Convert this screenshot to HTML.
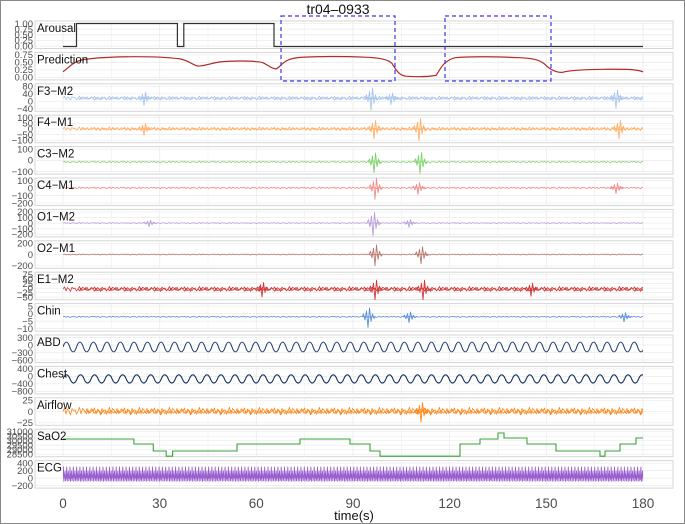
<!DOCTYPE html>
<html><head><meta charset="utf-8"><style>
html,body{margin:0;padding:0;background:#fff}
#w{width:683px;height:522px;border:1px solid #888;position:relative;overflow:hidden}
svg{position:absolute;left:-1px;top:-1px}
.tk{font-size:9.5px;fill:#4d4d4d;text-anchor:end}
.lb{font-size:11.5px;fill:#111}
</style></head><body><div id="w">
<svg width="685" height="524" xmlns="http://www.w3.org/2000/svg" xmlns:xlink="http://www.w3.org/1999/xlink" font-family="Liberation Sans, sans-serif">
<defs>
<clipPath id="c"><rect x="63" y="-3" width="580" height="33"/></clipPath>
<g id="pb"><rect x="35" y="0" width="638" height="27.5" fill="#fff" stroke="#d6d6d6"/>
<g stroke="#ebebeb" stroke-width="0.8">
<line x1="63" x2="63" y1="0" y2="27.5"/><line x1="111.3" x2="111.3" y1="0" y2="27.5" stroke-width="0.5"/><line x1="159.7" x2="159.7" y1="0" y2="27.5"/><line x1="208" x2="208" y1="0" y2="27.5" stroke-width="0.5"/><line x1="256.3" x2="256.3" y1="0" y2="27.5"/><line x1="304.6" x2="304.6" y1="0" y2="27.5" stroke-width="0.5"/><line x1="353" x2="353" y1="0" y2="27.5"/><line x1="401.3" x2="401.3" y1="0" y2="27.5" stroke-width="0.5"/><line x1="449.6" x2="449.6" y1="0" y2="27.5"/><line x1="498" x2="498" y1="0" y2="27.5" stroke-width="0.5"/><line x1="546.3" x2="546.3" y1="0" y2="27.5"/><line x1="594.6" x2="594.6" y1="0" y2="27.5" stroke-width="0.5"/><line x1="643" x2="643" y1="0" y2="27.5"/>
</g></g>
<g id="h3" stroke="#ebebeb" stroke-width="0.7"><line x1="35" x2="673" y1="2.5" y2="2.5"/><line x1="35" x2="673" y1="13.75" y2="13.75"/><line x1="35" x2="673" y1="25" y2="25"/></g>
<g id="h4" stroke="#ebebeb" stroke-width="0.7"><line x1="35" x2="673" y1="2.5" y2="2.5"/><line x1="35" x2="673" y1="10" y2="10"/><line x1="35" x2="673" y1="17.5" y2="17.5"/><line x1="35" x2="673" y1="25" y2="25"/></g>
<g id="h5" stroke="#ebebeb" stroke-width="0.7"><line x1="35" x2="673" y1="2.5" y2="2.5"/><line x1="35" x2="673" y1="8.1" y2="8.1"/><line x1="35" x2="673" y1="13.75" y2="13.75"/><line x1="35" x2="673" y1="19.4" y2="19.4"/><line x1="35" x2="673" y1="25" y2="25"/></g>
<g id="h6" stroke="#ebebeb" stroke-width="0.7"><line x1="35" x2="673" y1="2.5" y2="2.5"/><line x1="35" x2="673" y1="7" y2="7"/><line x1="35" x2="673" y1="11.5" y2="11.5"/><line x1="35" x2="673" y1="16" y2="16"/><line x1="35" x2="673" y1="20.5" y2="20.5"/><line x1="35" x2="673" y1="25" y2="25"/></g>
<path id="t" d="M0 0 l1.5 -1.2 1.5 2 1.5 -1.6 1.5 0.6 1.5 1.3 1.5 -2.1 1.5 0.8 1.5 -0.4 1.5 1.5 1.5 -1 1.5 -1.3 1.5 2.2 1.5 -1.8 1.5 0.5 1.5 0.9 1.5 -1.4 1.5 1.6 1.5 -0.7 1.5 -0.8 1.5 0.9" fill="none" stroke="currentColor" stroke-width="0.8" vector-effect="non-scaling-stroke" stroke-linejoin="round"/>
<g id="t4"><use xlink:href="#t"/><use xlink:href="#t" x="30"/><use xlink:href="#t" x="60"/><use xlink:href="#t" x="90"/></g>
<g id="N"><use xlink:href="#t4"/><use xlink:href="#t4" x="120"/><use xlink:href="#t4" x="240"/><use xlink:href="#t4" x="360"/><use xlink:href="#t4" x="480"/></g>
<path id="b" d="M-7 0 l1.5 -2 1.5 4 1.5 -6 1.5 11 1.5 -13 1.5 9 1.5 -5 1.5 3 1.5 -1" fill="none" stroke="currentColor" stroke-width="0.9" vector-effect="non-scaling-stroke" stroke-linejoin="round"/>
<path id="r" d="M0 0 c2 -5 4.5 -5 6.5 0 s4.5 5 6.5 0" fill="none" stroke="currentColor" stroke-width="1.1" vector-effect="non-scaling-stroke"/>
<g id="r4"><use xlink:href="#r"/><use xlink:href="#r" x="13"/><use xlink:href="#r" x="26"/><use xlink:href="#r" x="39"/></g>
<g id="R"><use xlink:href="#r4"/><use xlink:href="#r4" x="52"/><use xlink:href="#r4" x="104"/><use xlink:href="#r4" x="156"/><use xlink:href="#r4" x="208"/><use xlink:href="#r4" x="260"/><use xlink:href="#r4" x="312"/><use xlink:href="#r4" x="364"/><use xlink:href="#r4" x="416"/><use xlink:href="#r4" x="468"/><use xlink:href="#r4" x="520"/><use xlink:href="#r4" x="572"/></g>
<path id="e" d="M0 0 l0.4 -10 0.5 15 0.5 -7 0.6 1 1.3 1" fill="none" stroke="currentColor" stroke-width="0.9" vector-effect="non-scaling-stroke"/>
<g id="e8"><use xlink:href="#e"/><use xlink:href="#e" x="3.3"/><use xlink:href="#e" x="6.6"/><use xlink:href="#e" x="9.9"/><use xlink:href="#e" x="13.2"/><use xlink:href="#e" x="16.5"/><use xlink:href="#e" x="19.8"/><use xlink:href="#e" x="23.1"/></g>
<g id="e64"><use xlink:href="#e8"/><use xlink:href="#e8" x="26.4"/><use xlink:href="#e8" x="52.8"/><use xlink:href="#e8" x="79.2"/><use xlink:href="#e8" x="105.6"/><use xlink:href="#e8" x="132"/><use xlink:href="#e8" x="158.4"/><use xlink:href="#e8" x="184.8"/></g>
</defs>

<g transform="translate(0,21)"><use xlink:href="#pb"/><use xlink:href="#h5"/>
<text class="tk" x="33" y="5.8">1.00</text><text class="tk" x="33" y="11.4">0.75</text><text class="tk" x="33" y="17">0.50</text><text class="tk" x="33" y="22.7">0.25</text><text class="tk" x="33" y="28.3">0.00</text>
<path d="M63 25.5H76.5V2.5H177.4V25.5H183.8V2.5H274V25.5H643" fill="none" stroke="#333" stroke-width="1.2"/>
<text class="lb" x="37" y="11">Arousal</text></g>

<g transform="translate(0,52.4)"><use xlink:href="#pb"/><use xlink:href="#h4"/>
<text class="tk" x="33" y="5.8">0.75</text><text class="tk" x="33" y="13.3">0.50</text><text class="tk" x="33" y="20.8">0.25</text><text class="tk" x="33" y="28.3">0.00</text>
<path d="M63 19.4C70 14 74 9 82.3 7.5C95 5 115 4.5 133.9 4.3C150 4.3 168 4.8 180 6.5C188 8 192 12 197 13.5C202 14.5 208 11.5 220 9.5C235 8 255 8.5 262 10C268 12 270 16 276 16.5C282 14 282 6.5 300 5C320 3.8 345 4 365 4.8C380 5.5 388 7 392 11C396 17 398 22.5 406 23.8C418 24.6 428 24.4 436 23C440 18 442 9 455 5.3C470 4 495 4.2 520 5.3C535 6 540 8 545 12C550 17 555 20 562 20C570 18 580 17 604 16.9C625 16.8 636 16.6 643 19.4" fill="none" stroke="#b22a2a" stroke-width="1.2"/>
<text class="lb" x="37" y="11">Prediction</text></g>

<g transform="translate(0,83.8)"><use xlink:href="#pb"/><use xlink:href="#h4"/>
<text class="tk" x="33" y="5.8">80</text><text class="tk" x="33" y="13.3">40</text><text class="tk" x="33" y="20.8">0</text><text class="tk" x="33" y="28.3">−40</text>
<g clip-path="url(#c)" color="#a8c6ea"><use xlink:href="#N" transform="translate(63,14.5) scale(1,1.6)"/><use xlink:href="#N" transform="translate(78,14.5) scale(1,-1)"/>
<use xlink:href="#b" transform="translate(145,14.5) scale(1,1)"/><use xlink:href="#b" transform="translate(372,14.5) scale(1,1.7)"/><use xlink:href="#b" transform="translate(392,14.5) scale(1,0.9)"/><use xlink:href="#b" transform="translate(617,14.5) scale(1,1.4)"/></g>
<text class="lb" x="37" y="11">F3−M2</text></g>

<g transform="translate(0,115.2)"><use xlink:href="#pb"/><use xlink:href="#h5"/>
<text class="tk" x="33" y="5.8">100</text><text class="tk" x="33" y="11.4">50</text><text class="tk" x="33" y="17">0</text><text class="tk" x="33" y="22.7">−50</text><text class="tk" x="33" y="28.3">−100</text>
<g clip-path="url(#c)" color="#ffb16a"><use xlink:href="#N" transform="translate(63,13.75) scale(1,1.5)"/><use xlink:href="#N" transform="translate(80,13.75) scale(1,-0.9)"/>
<use xlink:href="#b" transform="translate(145,13.75) scale(1,0.9)"/><use xlink:href="#b" transform="translate(375,13.75) scale(1,1.4)"/><use xlink:href="#b" transform="translate(420,13.75) scale(1,1.7)"/><use xlink:href="#b" transform="translate(620,13.75) scale(1,1.4)"/></g>
<text class="lb" x="37" y="11">F4−M1</text></g>

<g transform="translate(0,146.6)"><use xlink:href="#pb"/><use xlink:href="#h3"/>
<text class="tk" x="33" y="5.8">100</text><text class="tk" x="33" y="17">0</text><text class="tk" x="33" y="28.3">−100</text>
<g clip-path="url(#c)" color="#7ed36b"><use xlink:href="#N" transform="translate(63,15.5) scale(1,0.7)"/>
<use xlink:href="#b" transform="translate(375,15.5) scale(1,1.5)"/><use xlink:href="#b" transform="translate(421,15.5) scale(1,1.6)"/></g>
<text class="lb" x="37" y="11">C3−M2</text></g>

<g transform="translate(0,178)"><use xlink:href="#pb"/><use xlink:href="#h4"/>
<text class="tk" x="33" y="5.8">100</text><text class="tk" x="33" y="13.3">0</text><text class="tk" x="33" y="20.8">−100</text><text class="tk" x="33" y="28.3">−200</text>
<g clip-path="url(#c)" color="#f28c8c"><use xlink:href="#N" transform="translate(63,10) scale(1,0.8)"/>
<use xlink:href="#b" transform="translate(376,10) scale(1,1.6)"/><use xlink:href="#b" transform="translate(419,10) scale(1,0.9)"/><use xlink:href="#b" transform="translate(617,10) scale(1,0.8)"/></g>
<text class="lb" x="37" y="11">C4−M1</text></g>

<g transform="translate(0,209.4)"><use xlink:href="#pb"/><use xlink:href="#h5"/>
<text class="tk" x="33" y="5.8">200</text><text class="tk" x="33" y="11.4">100</text><text class="tk" x="33" y="17">0</text><text class="tk" x="33" y="22.7">−100</text><text class="tk" x="33" y="28.3">−200</text>
<g clip-path="url(#c)" color="#bba0da"><use xlink:href="#N" transform="translate(63,13.75) scale(1,0.5)"/>
<use xlink:href="#b" transform="translate(374,13.75) scale(1,1.8)"/><use xlink:href="#b" transform="translate(410,13.75) scale(1,0.6)"/><use xlink:href="#b" transform="translate(150,13.75) scale(1,0.5)"/></g>
<text class="lb" x="37" y="11">O1−M2</text></g>

<g transform="translate(0,240.8)"><use xlink:href="#pb"/><use xlink:href="#h3"/>
<text class="tk" x="33" y="5.8">200</text><text class="tk" x="33" y="17">0</text><text class="tk" x="33" y="28.3">−200</text>
<g clip-path="url(#c)" color="#b67a70"><use xlink:href="#N" transform="translate(63,13.75) scale(1,0.5)"/>
<use xlink:href="#b" transform="translate(376,13.75) scale(1,1.6)"/><use xlink:href="#b" transform="translate(422,13.75) scale(1,1.3)"/></g>
<text class="lb" x="37" y="11">O2−M1</text></g>

<g transform="translate(0,272.2)"><use xlink:href="#pb"/><use xlink:href="#h6"/>
<text class="tk" x="33" y="5.8">75</text><text class="tk" x="33" y="10.3">50</text><text class="tk" x="33" y="14.8">25</text><text class="tk" x="33" y="19.3">0</text><text class="tk" x="33" y="23.8">−25</text><text class="tk" x="33" y="28.3">−50</text>
<g clip-path="url(#c)" color="#d13b3b"><use xlink:href="#N" transform="translate(63,17) scale(1,2)"/><use xlink:href="#N" transform="translate(78,17) scale(1,-1.4)"/>
<use xlink:href="#b" transform="translate(263,17) scale(1,1.1)"/><use xlink:href="#b" transform="translate(376,17) scale(1,1.5)"/><use xlink:href="#b" transform="translate(424,17) scale(1,1.5)"/><use xlink:href="#b" transform="translate(532,17) scale(1,1)"/></g>
<text class="lb" x="37" y="11">E1−M2</text></g>

<g transform="translate(0,303.6)"><use xlink:href="#pb"/><use xlink:href="#h4"/>
<text class="tk" x="33" y="5.8">5</text><text class="tk" x="33" y="13.3">0</text><text class="tk" x="33" y="20.8">−5</text><text class="tk" x="33" y="28.3">−10</text>
<g clip-path="url(#c)" color="#5b8fd8"><use xlink:href="#N" transform="translate(63,13.3) scale(1,0.5)"/>
<use xlink:href="#b" transform="translate(369,13.3) scale(1,1.5)"/><use xlink:href="#b" transform="translate(410,13.3) scale(1,0.8)"/><use xlink:href="#b" transform="translate(625,13.3) scale(1,0.7)"/></g>
<text class="lb" x="37" y="11">Chin</text></g>

<g transform="translate(0,335)"><use xlink:href="#pb"/><use xlink:href="#h4"/>
<text class="tk" x="33" y="5.8">300</text><text class="tk" x="33" y="13.3">0</text><text class="tk" x="33" y="20.8">−300</text><text class="tk" x="33" y="28.3">−600</text>
<g clip-path="url(#c)" color="#23406e"><use xlink:href="#R" transform="translate(63,12) scale(1.04,1.3)"/></g>
<text class="lb" x="37" y="11">ABD</text></g>

<g transform="translate(0,366.4)"><use xlink:href="#pb"/><use xlink:href="#h4"/>
<text class="tk" x="33" y="5.8">400</text><text class="tk" x="33" y="13.3">0</text><text class="tk" x="33" y="20.8">−400</text><text class="tk" x="33" y="28.3">−800</text>
<g clip-path="url(#c)" color="#12305a"><use xlink:href="#R" transform="translate(63,12.5) scale(1.08,1.1)"/></g>
<text class="lb" x="37" y="11">Chest</text></g>

<g transform="translate(0,397.8)"><use xlink:href="#pb"/><use xlink:href="#h3"/>
<text class="tk" x="33" y="5.8">25</text><text class="tk" x="33" y="17">0</text><text class="tk" x="33" y="28.3">−25</text>
<g clip-path="url(#c)" color="#ff861a"><use xlink:href="#N" transform="translate(63,13.75) scale(1,3)"/><use xlink:href="#N" transform="translate(85,13.75) scale(1,-1.8)"/>
<use xlink:href="#b" transform="translate(422,13.75) scale(1,1.5)"/></g>
<text class="lb" x="37" y="11">Airflow</text></g>

<g transform="translate(0,429.2)"><use xlink:href="#pb"/><use xlink:href="#h6"/>
<text class="tk" x="33" y="5.8">31000</text><text class="tk" x="33" y="10.3">30500</text><text class="tk" x="33" y="14.8">30000</text><text class="tk" x="33" y="19.3">29500</text><text class="tk" x="33" y="23.8">29000</text><text class="tk" x="33" y="28.3">28500</text>
<path d="M63 9.8H133.9V14.8H153.3V21.8H166.2V27H172.6V21.8H237V14.8H300V9.8H350V14.8H370V21.8H380V27H460V14.8H480V9.8H498V3.8H504V8.8H527V14.8H556V21.8H600V27H605V21.8H620V14.8H636V8.8H643" fill="none" stroke="#3aa33a" stroke-width="1.1"/>
<text class="lb" x="37" y="11">SaO2</text></g>

<g transform="translate(0,460.6)"><use xlink:href="#pb"/><use xlink:href="#h4"/>
<text class="tk" x="33" y="5.8">400</text><text class="tk" x="33" y="13.3">200</text><text class="tk" x="33" y="20.8">0</text><text class="tk" x="33" y="28.3">−200</text>
<g clip-path="url(#c)" color="#9a5fcf"><use xlink:href="#e64" transform="translate(63,16)"/><use xlink:href="#e64" transform="translate(274.2,16)"/><use xlink:href="#e64" transform="translate(485.4,16)"/>
<use xlink:href="#e64" transform="translate(64.6,17) scale(1,0.7)"/><use xlink:href="#e64" transform="translate(275.8,17) scale(1,0.7)"/><use xlink:href="#e64" transform="translate(487,17) scale(1,0.7)"/>
<use xlink:href="#N" transform="translate(63,17) scale(1,1.5)"/></g>
<text class="lb" x="37" y="11">ECG</text></g>

<rect x="281" y="16" width="114" height="65" fill="none" stroke="#3a3ae6" stroke-width="1.2" stroke-dasharray="4,3"/>
<rect x="445" y="16" width="106" height="65" fill="none" stroke="#3a3ae6" stroke-width="1.2" stroke-dasharray="4,3"/>
<text x="338" y="14" font-size="14" text-anchor="middle" fill="#111">tr04–0933</text>
<g font-size="13.5" fill="#4d4d4d" text-anchor="middle">
<text x="63" y="508">0</text><text x="159.7" y="508">30</text><text x="256.3" y="508">60</text><text x="353" y="508">90</text><text x="449.6" y="508">120</text><text x="546.3" y="508">150</text><text x="643" y="508">180</text></g>
<text x="354" y="520" font-size="13" fill="#111" text-anchor="middle">time(s)</text>
</svg></div></body></html>
